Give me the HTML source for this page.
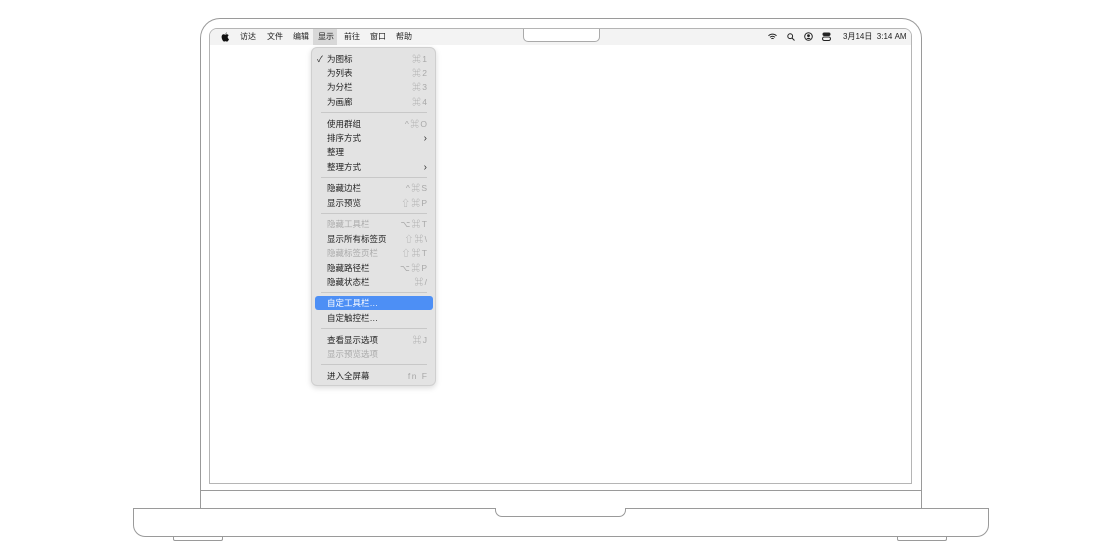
<!DOCTYPE html>
<html><head><meta charset="utf-8"><style>
*{margin:0;padding:0;box-sizing:border-box}
body{width:1120px;height:560px;background:#fff;position:relative;overflow:hidden;font-family:"Liberation Sans","Noto Sans CJK SC",sans-serif}
.abs{position:absolute}
.lid{left:200px;top:18px;width:722px;height:473px;border:1.5px solid #9a9a9a;border-bottom:none;border-radius:20px 20px 0 0}
.scr{left:209px;top:28px;width:703px;height:456px;border:1px solid #b5b5b5;border-radius:8px 8px 0 0;overflow:hidden;background:#fff}
.mb{left:0;top:0;width:100%;height:16px;background:#f3f3f3;font-size:8px;color:#222}
.mb span{position:absolute;top:2px}
.notch{left:313px;top:-1px;width:77px;height:14px;background:#fff;border:1px solid #aaa;border-top:none;border-radius:0 0 5px 5px}
.hinge{left:200px;top:490px;width:722px;height:19px;border:1.5px solid #9a9a9a;border-bottom:none}
.base{left:133px;top:508px;width:856px;height:29px;border:1.5px solid #9a9a9a;border-radius:0 0 12px 12px;background:#fff}
.tp{left:495px;top:508px;width:131px;height:9px;border:1.5px solid #9a9a9a;border-top:none;border-radius:0 0 7px 7px;background:#fff}
.foot{top:537px;width:50px;height:4px;border:1.5px solid #9a9a9a;border-top:none;border-radius:0 0 2px 2px}
.menu{left:311px;top:47px;width:125px;height:339px;background:#e3e3e3;border:1px solid #cfcfcf;border-radius:6px;box-shadow:0 2px 6px rgba(0,0,0,.15);font-size:8.5px;color:#222}
.it{position:absolute;left:15px;width:100px;height:13px;line-height:13px}
.it b{font-weight:normal;position:absolute;right:0;color:#a8a8a8;font-size:8.5px;letter-spacing:1.5px;margin-right:-1.5px}
.dis{color:#aaa}
.sep{position:absolute;left:9px;width:106px;height:1px;background:#c8c8c8}
.hl{position:absolute;left:3px;width:118px;height:14px;background:#4d8ff5;border-radius:3px}
</style></head><body>
<div class="abs lid"></div>
<div class="abs scr">
 <div class="abs mb">
  <svg class="abs" style="left:11px;top:3px" width="9" height="10" viewBox="0 0 9 10"><path d="M6 0.5c-.7.1-1.4.6-1.6 1.3.7 0 1.3-.5 1.6-1.3zM4.5 2.6c-.6 0-1.1-.4-1.8-.4C1.6 2.2.6 3.1.6 4.8c0 2 1.3 4.8 2.5 4.8.6 0 .8-.3 1.4-.3s.8.3 1.4.3c1 0 1.8-1.6 2.1-2.5-.9-.4-1.3-1.2-1.3-2 0-.8.4-1.4 1-1.8-.4-.6-1.1-1-1.8-1-.6 0-1 .3-1.4.3z" fill="#111"/></svg>
  <span style="left:30px">访达</span><span style="left:57px">文件</span><span style="left:83px">编辑</span>
  <span style="left:103px;top:0;height:16px;width:24px;background:#d8d8d8"></span>
  <span style="left:108px">显示</span><span style="left:134px">前往</span><span style="left:160px">窗口</span><span style="left:186px">帮助</span>
  <span style="left:633px">3月14日&nbsp; 3:14 AM</span>
  <svg class="abs" style="left:558px;top:4px" width="9" height="8" viewBox="0 0 9 8"><path d="M0.5 2.8a5.5 5.5 0 0 1 8 0M2 4.3a3.4 3.4 0 0 1 5 0M3.4 5.8a1.5 1.5 0 0 1 2.2 0" stroke="#222" fill="none" stroke-width="1"/></svg>
  <svg class="abs" style="left:577px;top:4px" width="8" height="8" viewBox="0 0 8 8"><circle cx="3.2" cy="3.2" r="2.4" stroke="#222" fill="none"/><path d="M5 5l2.5 2.5" stroke="#222"/></svg>
  <svg class="abs" style="left:594px;top:3px" width="9" height="9" viewBox="0 0 9 9"><circle cx="4.5" cy="4.5" r="3.8" stroke="#222" fill="none"/><circle cx="4.5" cy="3.6" r="1.4" fill="#222"/><path d="M2.3 7a2.6 2.6 0 0 1 4.4 0" fill="#222"/></svg>
  <svg class="abs" style="left:612px;top:3px" width="9" height="9" viewBox="0 0 9 9"><rect x="0.5" y="0.5" width="8" height="3.5" rx="1.7" fill="#222"/><rect x="0.5" y="5" width="8" height="3.5" rx="1.7" stroke="#222" fill="none"/></svg>
 </div>
 <div class="abs notch"></div>
</div>
<div class="abs hinge"></div>
<div class="abs base"></div>
<div class="abs tp"></div>
<div class="abs foot" style="left:173px"></div>
<div class="abs foot" style="left:897px"></div>

<div class="abs menu">
 <div class="it" style="top:5px"><span style="position:absolute;left:-10px">✓</span>为图标<b>⌘1</b></div>
 <div class="it" style="top:19px">为列表<b>⌘2</b></div>
 <div class="it" style="top:33px">为分栏<b>⌘3</b></div>
 <div class="it" style="top:48px">为画廊<b>⌘4</b></div>
 <div class="sep" style="top:64px"></div>
 <div class="it" style="top:70px">使用群组<b>^⌘O</b></div>
 <div class="it" style="top:84px">排序方式<b style="color:#333;font-size:10px">›</b></div>
 <div class="it" style="top:98px">整理</div>
 <div class="it" style="top:113px">整理方式<b style="color:#333;font-size:10px">›</b></div>
 <div class="sep" style="top:129px"></div>
 <div class="it" style="top:134px">隐藏边栏<b>^⌘S</b></div>
 <div class="it" style="top:149px">显示预览<b>⇧⌘P</b></div>
 <div class="sep" style="top:165px"></div>
 <div class="it dis" style="top:170px">隐藏工具栏<b>⌥⌘T</b></div>
 <div class="it" style="top:185px">显示所有标签页<b>⇧⌘\</b></div>
 <div class="it dis" style="top:199px">隐藏标签页栏<b>⇧⌘T</b></div>
 <div class="it" style="top:214px">隐藏路径栏<b>⌥⌘P</b></div>
 <div class="it" style="top:228px">隐藏状态栏<b>⌘/</b></div>
 <div class="sep" style="top:244px"></div>
 <div class="hl" style="top:248px"></div>
 <div class="it" style="top:249px;color:#fff">自定工具栏…</div>
 <div class="it" style="top:264px">自定触控栏…</div>
 <div class="sep" style="top:280px"></div>
 <div class="it" style="top:286px">查看显示选项<b>⌘J</b></div>
 <div class="it dis" style="top:300px">显示预览选项</div>
 <div class="sep" style="top:316px"></div>
 <div class="it" style="top:322px">进入全屏幕<b>fn F</b></div>
</div>
</body></html>
